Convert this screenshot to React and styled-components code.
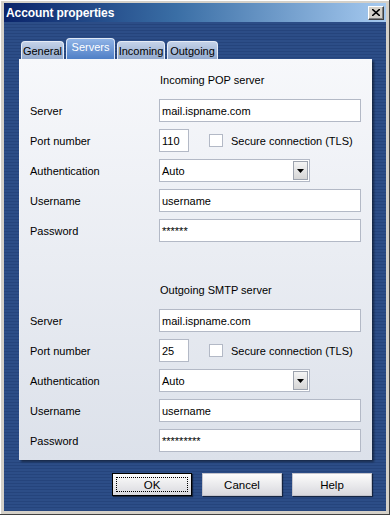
import React from "react";
import styled, { createGlobalStyle } from "styled-components";

const Global = createGlobalStyle`
  html, body { margin: 0; padding: 0; }
  body {
    width: 390px;
    height: 515px;
    overflow: hidden;
    font-family: "Liberation Sans", Arial, sans-serif;
    font-size: 11px;
    color: #000;
  }
`;

const Frame = styled.div`
  width: 390px;
  height: 515px;
  box-sizing: border-box;
  display: flex;
  flex-direction: column;
  background: #d4d0c8;
  padding: 3px 4px 4px 4px;
  box-shadow: inset -1px -1px 0 #404040, inset 1px 1px 0 #ffffff;
`;

const TitleBar = styled.div`
  height: 19px;
  display: flex;
  align-items: center;
  justify-content: space-between;
  padding: 0 2px 0 2px;
  background: linear-gradient(to right, #0a246a 0%, #3a6ea5 45%, #a6caf0 100%);
`;

const Title = styled.span`
  color: #fff;
  font-weight: bold;
  font-size: 12px;
  letter-spacing: -0.1px;
`;

const CloseBtn = styled.div`
  width: 16px;
  height: 14px;
  box-sizing: border-box;
  background: #d4d0c8;
  border: 1px solid;
  border-color: #fff #404040 #404040 #fff;
  box-shadow: inset -1px -1px 0 #808080;
  display: flex;
  align-items: center;
  justify-content: center;
`;

const Body = styled.div`
  flex: 1;
  display: flex;
  flex-direction: column;
  padding: 16px 14px 15px 15px;
  background: repeating-linear-gradient(to bottom, #2c4d87 0 2px, #25447c 2px 3px);
`;

const TabRow = styled.div`
  display: flex;
  align-items: flex-end;
  gap: 2px;
  height: 21px;
  padding-left: 2px;
`;

const Tab = styled.div`
  width: ${(p) => p.$w}px;
  height: ${(p) => (p.$active ? "21px" : "18px")};
  box-sizing: border-box;
  display: flex;
  align-items: center;
  justify-content: center;
  white-space: nowrap;
  border: 1px solid ${(p) => (p.$active ? "#dfe8f6" : "#e6ecf6")};
  border-bottom: none;
  border-radius: 4px 4px 0 0;
  color: ${(p) => (p.$active ? "#fff" : "#000")};
  font-size: 11px;
  background: ${(p) =>
    p.$active
      ? "linear-gradient(to bottom, #8fb3e6, #4f7fc6)"
      : "linear-gradient(to bottom, #c4d2e8, #93aace)"};
  padding-bottom: ${(p) => (p.$active ? "4px" : "0")};
`;

const Panel = styled.div`
  display: flex;
  flex-direction: column;
  padding: 14px 11px 8px 11px;
  background: linear-gradient(to bottom, #f7f8fb, #dce1ea);
  box-shadow: 2px 2px 2px rgba(0, 0, 0, 0.45);
`;

const Section = styled.div`
  display: flex;
  flex-direction: column;
  gap: 7px;
  & + & {
    margin-top: 41px;
  }
`;

const Heading = styled.div`
  height: 14px;
  line-height: 14px;
  padding-left: 130px;
  margin-bottom: 5px;
`;

const Row = styled.div`
  display: grid;
  grid-template-columns: 129px 1fr;
  align-items: center;
  height: 23px;
`;

const Label = styled.span``;

const Field = styled.div`
  display: flex;
  align-items: center;
  gap: 20px;
`;

const Input = styled.div`
  width: ${(p) => p.$w || 202}px;
  height: 23px;
  box-sizing: border-box;
  background: #fff;
  border: 1px solid #b3b9c6;
  display: flex;
  align-items: center;
  padding-left: 2px;
`;

const Check = styled.div`
  width: 14px;
  height: 13px;
  box-sizing: border-box;
  background: #fff;
  border: 1px solid #b3b9c6;
`;

const CheckLabel = styled.span`
  margin-left: -12px;
`;

const Select = styled(Input)`
  width: 151px;
  justify-content: space-between;
  padding: 1px 1px 1px 2px;
`;

const Arrow = styled.div`
  width: 15px;
  height: 19px;
  box-sizing: border-box;
  border: 1px solid #9da3ae;
  background: linear-gradient(to bottom, #f4f4f4, #d6d6d6);
  display: flex;
  align-items: center;
  justify-content: center;
`;

const Buttons = styled.div`
  display: flex;
  justify-content: flex-end;
  gap: 10px;
  margin-top: 13px;
`;

const Button = styled.div`
  width: 80px;
  height: 23px;
  box-sizing: border-box;
  display: flex;
  align-items: center;
  justify-content: center;
  position: relative;
  font-size: 11.5px;
  background: linear-gradient(to bottom, #fcfcfc, #d9d9de);
  border: 1px solid ${(p) => (p.$default ? "#000" : "#c4c4cc")};
  box-shadow: 1px 1px 1px rgba(0, 0, 0, 0.5);
  &::after {
    content: "";
    display: ${(p) => (p.$default ? "block" : "none")};
    position: absolute;
    inset: 3px;
    border: 1px dotted #000;
  }
`;

const ServerSection = ({ title, port, password }) => (
  <Section>
    <Heading>{title}</Heading>
    <Row>
      <Label>Server</Label>
      <Input>mail.ispname.com</Input>
    </Row>
    <Row>
      <Label>Port number</Label>
      <Field>
        <Input $w={30}>{port}</Input>
        <Check />
        <CheckLabel>Secure connection (TLS)</CheckLabel>
      </Field>
    </Row>
    <Row>
      <Label>Authentication</Label>
      <Select>
        <span>Auto</span>
        <Arrow>
          <svg width="7" height="4" viewBox="0 0 7 4">
            <path d="M0 0h7L3.5 4z" fill="#000" />
          </svg>
        </Arrow>
      </Select>
    </Row>
    <Row>
      <Label>Username</Label>
      <Input>username</Input>
    </Row>
    <Row>
      <Label>Password</Label>
      <Input>{password}</Input>
    </Row>
  </Section>
);

export default function App() {
  return (
    <>
      <Global />
      <Frame>
        <TitleBar>
          <Title>Account properties</Title>
          <CloseBtn>
            <svg width="8" height="7" viewBox="0 0 8 7">
              <path d="M0 0l8 7M8 0L0 7" stroke="#000" strokeWidth="1.6" />
            </svg>
          </CloseBtn>
        </TitleBar>
        <Body>
          <TabRow>
            <Tab $w={43}>General</Tab>
            <Tab $w={49} $active>Servers</Tab>
            <Tab $w={48}>Incoming</Tab>
            <Tab $w={51}>Outgoing</Tab>
          </TabRow>
          <Panel>
            <ServerSection title="Incoming POP server" port="110" password="******" />
            <ServerSection title="Outgoing SMTP server" port="25" password="*********" />
          </Panel>
          <Buttons>
            <Button $default>OK</Button>
            <Button>Cancel</Button>
            <Button>Help</Button>
          </Buttons>
        </Body>
      </Frame>
    </>
  );
}
